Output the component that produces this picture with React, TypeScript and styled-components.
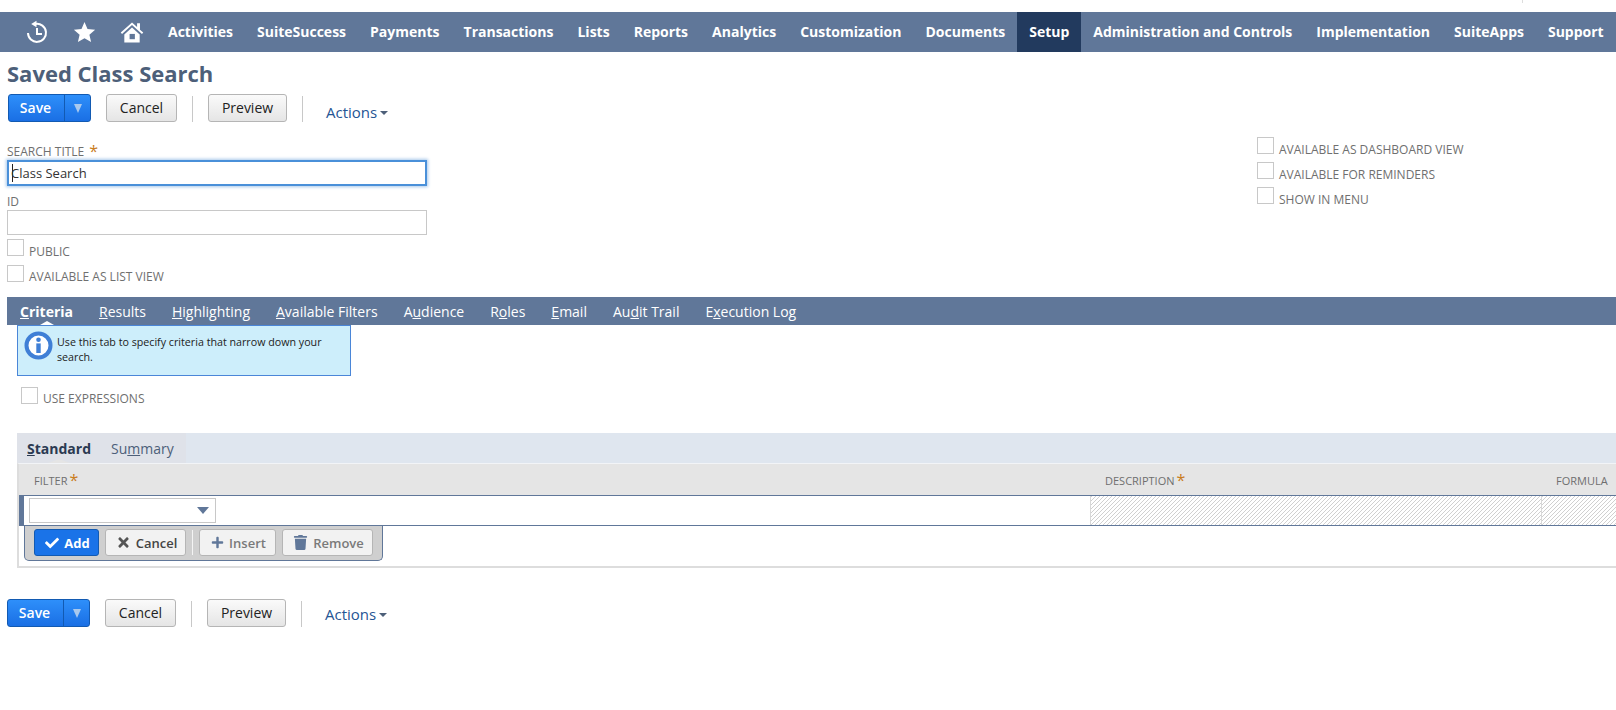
import styled, { createGlobalStyle } from "styled-components";
import { FaCheck, FaTimes, FaPlus, FaTrash } from "react-icons/fa";

const GlobalStyle = createGlobalStyle`
  html, body {
    margin: 0;
    padding: 0;
    background: #fff;
    overflow: hidden;
  }
  body {
    font-family: "Open Sans", "Liberation Sans", sans-serif;
  }
`;

const Page = styled.div`
  width: 1616px;
  height: 710px;
  overflow: hidden;
  position: relative;
`;

const TopStrip = styled.div`
  height: 12px;
  display: flex;
  justify-content: flex-end;
  padding-right: 93px;
`;

const Tick = styled.div`
  width: 1px;
  height: 3px;
  background: #ddd;
`;

const Nav = styled.nav`
  height: 40px;
  background: #607799;
  display: flex;
  align-items: stretch;
`;

const NavIcons = styled.div`
  display: flex;
  align-items: center;
  width: 156px;
  flex: none;
  padding-left: 25px;
  gap: 24px;
  box-sizing: border-box;
`;

const NavItem = styled.div<{ $active?: boolean }>`
  display: flex;
  align-items: center;
  padding: 0 12px 2px;
  white-space: nowrap;
  color: #fff;
  font-size: 14px;
  font-weight: 700;
  background: ${({ $active }) => ($active ? "#223a5e" : "transparent")};
`;

const Content = styled.div`
  padding-left: 7px;
`;

const Title = styled.h1`
  margin: 0;
  height: 42px;
  line-height: 43px;
  font-size: 22px;
  font-weight: 700;
  color: #4d5f79;
`;

const ButtonRow = styled.div<{ $shift?: number }>`
  display: flex;
  align-items: flex-start;
  height: 28px;
  margin-left: ${({ $shift }) => $shift ?? 1}px;
`;

const SaveGroup = styled.div`
  display: flex;
  width: 83px;
  height: 28px;
  box-sizing: border-box;
  border: 1px solid #125ab2;
  border-radius: 3px;
  background: linear-gradient(#2e8ffa, #1a6fe4);
`;

const SaveLabel = styled.div`
  width: 56px;
  box-sizing: border-box;
  padding-right: 2px;
  color: #fff;
  font-size: 14px;
  font-weight: 600;
  line-height: 26px;
  text-align: center;
  border-right: 1px solid #125ab2;
`;

const SaveArrow = styled.div`
  flex: 1;
  display: flex;
  align-items: center;
  justify-content: center;
  &::after {
    content: "";
    border-left: 4px solid transparent;
    border-right: 4px solid transparent;
    border-top: 9px solid #a9c9ee;
  }
`;

const GrayButton = styled.div<{ $width: number; $gap: number }>`
  width: ${({ $width }) => $width}px;
  height: 28px;
  margin-left: ${({ $gap }) => $gap}px;
  box-sizing: border-box;
  border: 1px solid #b5b5b5;
  border-radius: 3px;
  background: linear-gradient(#fafafa, #e5e5e5);
  color: #222;
  font-size: 14px;
  font-weight: 500;
  line-height: 26px;
  text-align: center;
`;

const Separator = styled.div`
  width: 1px;
  height: 26px;
  margin: 2px 0 0 15px;
  background: #c8c8c8;
`;

const Actions = styled.div<{ $top: number }>`
  margin: ${({ $top }) => $top}px 0 0 23px;
  color: #255594;
  font-size: 15px;
  line-height: 26px;
  display: flex;
  align-items: center;
  gap: 3px;
  &::after {
    content: "";
    margin-top: 2px;
    border-left: 4px solid transparent;
    border-right: 4px solid transparent;
    border-top: 4px solid #4d5f79;
  }
`;

const FormArea = styled.div`
  display: flex;
  height: 175px;
`;

const LeftForm = styled.div`
  width: 1250px;
  flex: none;
  padding-top: 21px;
`;

const RightForm = styled.div`
  padding-top: 15px;
`;

const FieldLabel = styled.div`
  height: 17px;
  line-height: 18px;
  font-size: 12px;
  color: #6f6f6f;
  display: flex;
  align-items: flex-start;
`;

const Required = styled.span`
  color: #c97d1d;
  font-size: 16px;
  line-height: 16px;
  margin-left: 5px;
`;

const TitleInput = styled.div`
  width: 420px;
  height: 26px;
  box-sizing: border-box;
  border: 2px solid #4a90d9;
  box-shadow: 0 0 3px 1px #a8c8ea;
  font-size: 13px;
  line-height: 22px;
  color: #333;
  display: flex;
  align-items: center;
  padding-left: 3px;
`;

const TextCaret = styled.span`
  width: 1px;
  height: 18px;
  margin-right: -2px;
  background: #222;
`;

const IdBlock = styled.div`
  margin-top: 7px;
`;

const IdInput = styled.div`
  width: 420px;
  height: 25px;
  box-sizing: border-box;
  border: 1px solid #c8c8c8;
`;

const CheckRow = styled.div<{ $height?: number }>`
  display: flex;
  align-items: flex-start;
  height: ${({ $height }) => $height ?? 25}px;
`;

const Box = styled.span`
  width: 17px;
  height: 17px;
  box-sizing: border-box;
  border: 1px solid #c8c8c8;
  flex: none;
`;

const CheckLabel = styled.span<{ $top?: number }>`
  margin: ${({ $top }) => $top ?? 4}px 0 0 5px;
  font-size: 12px;
  line-height: 18px;
  color: #6f6f6f;
  white-space: nowrap;
`;

const LeftChecks = styled.div`
  margin-top: 4px;
`;

const TabBar = styled.div`
  height: 28px;
  background: #607799;
  display: flex;
  align-items: stretch;
  padding-left: 13px;
  gap: 26px;
`;

const Tab = styled.div<{ $active?: boolean }>`
  position: relative;
  color: #fff;
  font-size: 14px;
  font-weight: ${({ $active }) => ($active ? 700 : 400)};
  line-height: 30px;
  white-space: nowrap;
  ${({ $active }) =>
    $active &&
    `&::after {
      content: "";
      position: absolute;
      left: 50%;
      bottom: 0;
      margin-left: -7px;
      border-left: 7px solid transparent;
      border-right: 7px solid transparent;
      border-bottom: 4px solid #fff;
    }`}
`;

const InfoBox = styled.div`
  margin-left: 10px;
  width: 334px;
  height: 51px;
  box-sizing: border-box;
  border: 1px solid #4a86d8;
  background: #cdeefb;
  display: flex;
  padding: 5px 6px 0 6px;
  gap: 4px;
`;

const InfoText = styled.div`
  font-size: 10.7px;
  line-height: 14.5px;
  color: #222;
  padding-top: 4px;
`;

const ExpressionRow = styled(CheckRow)`
  margin: 11px 0 0 14px;
  height: 46px;
`;

const SubTabStrip = styled.div`
  margin-left: 10px;
  height: 30px;
  background: #dfe6ef;
  display: flex;
`;

const SubTabs = styled.div`
  width: 169px;
  box-sizing: border-box;
  background: #dfe2e9;
  display: flex;
  padding-left: 10px;
  gap: 20px;
`;

const SubTab = styled.div<{ $active?: boolean }>`
  position: relative;
  font-size: 14px;
  line-height: 31px;
  color: ${({ $active }) => ($active ? "#2b3a52" : "#4d5f79")};
  font-weight: ${({ $active }) => ($active ? 700 : 400)};
  white-space: nowrap;
  ${({ $active }) =>
    $active &&
    `&::after {
      content: "";
      position: absolute;
      left: 50%;
      bottom: 0;
      margin-left: -11px;
      border-left: 11px solid transparent;
      border-right: 11px solid transparent;
      border-bottom: 4px solid #e5e5e5;
    }`}
`;

const GridBox = styled.div`
  margin-left: 10px;
  height: 105px;
  box-sizing: border-box;
  border-left: 2px solid #ddd;
  border-bottom: 2px solid #ddd;
  border-top: 1px solid #f2f4f7;
`;

const HeaderRow = styled.div`
  height: 31px;
  background: #e5e5e5;
  display: grid;
  grid-template-columns: 1071px 451px 1fr;
`;

const HeaderCell = styled.div<{ $pad: number }>`
  padding-left: ${({ $pad }) => $pad}px;
  font-size: 11px;
  line-height: 34px;
  color: #6f6f6f;
  display: flex;
  align-items: flex-start;
  white-space: nowrap;
`;

const HeaderStar = styled(Required)`
  margin: 8px 0 0 2px;
`;

const EditRow = styled.div`
  height: 31px;
  box-sizing: border-box;
  border-top: 1px solid #607799;
  border-bottom: 1px solid #607799;
  display: grid;
  grid-template-columns: 1071px 451px 1fr;
`;

const FilterCell = styled.div`
  border-left: 5px solid #607799;
  padding: 2px 0 0 5px;
`;

const HatchCell = styled.div`
  border-left: 1px solid #d8d8d8;
  background: repeating-linear-gradient(135deg, #d0d0d0 0, #d0d0d0 1.2px, #fff 1.2px, #fff 2.83px);
`;

const SelectBox = styled.div`
  width: 187px;
  height: 25px;
  box-sizing: border-box;
  border: 1px solid #c8c8c8;
  display: flex;
  align-items: center;
  justify-content: flex-end;
  padding-right: 6px;
  &::after {
    content: "";
    border-left: 6px solid transparent;
    border-right: 6px solid transparent;
    border-top: 7px solid #607799;
  }
`;

const ActionPanel = styled.div`
  margin-left: 5px;
  width: 359px;
  height: 35px;
  box-sizing: border-box;
  background: #cfcfcf;
  border: 1px solid #607799;
  border-top: none;
  border-radius: 0 0 5px 5px;
  display: flex;
  align-items: flex-start;
  padding: 3px 0 0 9px;
`;

const RowButton = styled.div<{ $width: number; $gap: number; $primary?: boolean; $muted?: boolean }>`
  width: ${({ $width }) => $width}px;
  height: 27px;
  margin-left: ${({ $gap }) => $gap}px;
  box-sizing: border-box;
  border: 1px solid ${({ $primary }) => ($primary ? "#125ab2" : "#b5b5b5")};
  border-radius: 3px;
  background: ${({ $primary }) => ($primary ? "#1a73e8" : "#f2f2f2")};
  color: ${({ $primary, $muted }) => ($primary ? "#fff" : $muted ? "#7a7a7a" : "#444")};
  font-size: 13px;
  font-weight: ${({ $primary }) => ($primary ? 700 : 600)};
  display: flex;
  align-items: center;
  justify-content: center;
  gap: 5px;
  padding-left: 2px;
`;

const PanelDivider = styled.div`
  width: 1px;
  height: 25px;
  margin: 1px 0 0 6px;
  background: #f4f4f4;
`;

const BottomRow = styled.div`
  margin-top: 31px;
`;

const HistoryIcon = () => (
  <svg width="24" height="24" viewBox="0 0 24 24" fill="none" stroke="#fff" strokeWidth="2">
    <path d="M10.5 4A9 9 0 1 1 3 13" />
    <path d="M11.5 .8 6.2 4l5.3 3.2Z" fill="#fff" stroke="none" />
    <path d="M12 8v6h5" />
  </svg>
);

const StarIcon = () => (
  <svg width="23" height="22" viewBox="0 0 22 22" fill="#fff">
    <path d="M11 1l3 7 7.6.7-5.7 5 1.7 7.4L11 17.2 4.4 21.1l1.7-7.4-5.7-5L8 8z" />
  </svg>
);

const HomeIcon = () => (
  <svg width="24" height="24" viewBox="0 0 25 24" fill="#fff">
    <path d="M12.5 2 .8 12.6l1.3 1.5L12.5 4.8l10.4 9.3 1.3-1.5-3.4-3V3h-3v3.8z" />
    <path d="M4.5 14.5 12.5 7.3l8 7.2V23H4.5z" />
    <rect x="10" y="14" width="5.5" height="5.5" fill="#607799" />
  </svg>
);

const InfoIcon = () => (
  <svg width="29" height="29" viewBox="0 0 29 29" style={{ flex: "none" }}>
    <circle cx="14.5" cy="14.5" r="12" fill="#fff" stroke="#3f7fd6" strokeWidth="4" />
    <circle cx="14.5" cy="8.8" r="2.3" fill="#3f7fd6" />
    <rect x="12.3" y="12.4" width="4.4" height="9.6" fill="#3f7fd6" />
  </svg>
);

const navItems = [
  "Activities",
  "SuiteSuccess",
  "Payments",
  "Transactions",
  "Lists",
  "Reports",
  "Analytics",
  "Customization",
  "Documents",
  "Setup",
  "Administration and Controls",
  "Implementation",
  "SuiteApps",
  "Support",
];

const Buttons = ({ shift, actionsTop }: { shift?: number; actionsTop: number }) => (
  <ButtonRow $shift={shift}>
    <SaveGroup>
      <SaveLabel>Save</SaveLabel>
      <SaveArrow />
    </SaveGroup>
    <GrayButton $width={71} $gap={15}>Cancel</GrayButton>
    <Separator />
    <GrayButton $width={79} $gap={15}>Preview</GrayButton>
    <Separator />
    <Actions $top={actionsTop}>Actions</Actions>
  </ButtonRow>
);

const App = () => {
  return (
    <Page>
      <GlobalStyle />
      <TopStrip>
        <Tick />
      </TopStrip>
      <Nav>
        <NavIcons>
          <HistoryIcon />
          <StarIcon />
          <HomeIcon />
        </NavIcons>
        {navItems.map((item) => (
          <NavItem key={item} $active={item === "Setup"}>
            {item}
          </NavItem>
        ))}
      </Nav>
      <Content>
        <Title>Saved Class Search</Title>
        <Buttons actionsTop={5} />
        <FormArea>
          <LeftForm>
            <FieldLabel>
              SEARCH TITLE<Required>*</Required>
            </FieldLabel>
            <TitleInput>
              <TextCaret />
              Class Search
            </TitleInput>
            <IdBlock>
              <FieldLabel>ID</FieldLabel>
              <IdInput />
            </IdBlock>
            <LeftChecks>
              <CheckRow $height={26}>
                <Box />
                <CheckLabel>PUBLIC</CheckLabel>
              </CheckRow>
              <CheckRow>
                <Box />
                <CheckLabel $top={3}>AVAILABLE AS LIST VIEW</CheckLabel>
              </CheckRow>
            </LeftChecks>
          </LeftForm>
          <RightForm>
            <CheckRow>
              <Box />
              <CheckLabel>AVAILABLE AS DASHBOARD VIEW</CheckLabel>
            </CheckRow>
            <CheckRow>
              <Box />
              <CheckLabel>AVAILABLE FOR REMINDERS</CheckLabel>
            </CheckRow>
            <CheckRow>
              <Box />
              <CheckLabel>SHOW IN MENU</CheckLabel>
            </CheckRow>
          </RightForm>
        </FormArea>
        <TabBar>
          <Tab $active>
            <u>C</u>riteria
          </Tab>
          <Tab>
            <u>R</u>esults
          </Tab>
          <Tab>
            <u>H</u>ighlighting
          </Tab>
          <Tab>
            <u>A</u>vailable Filters
          </Tab>
          <Tab>
            A<u>u</u>dience
          </Tab>
          <Tab>
            R<u>o</u>les
          </Tab>
          <Tab>
            <u>E</u>mail
          </Tab>
          <Tab>
            Au<u>d</u>it Trail
          </Tab>
          <Tab>
            E<u>x</u>ecution Log
          </Tab>
        </TabBar>
        <InfoBox>
          <InfoIcon />
          <InfoText>Use this tab to specify criteria that narrow down your search.</InfoText>
        </InfoBox>
        <ExpressionRow>
          <Box />
          <CheckLabel $top={3}>USE EXPRESSIONS</CheckLabel>
        </ExpressionRow>
        <SubTabStrip>
          <SubTabs>
            <SubTab $active>
              <u>S</u>tandard
            </SubTab>
            <SubTab>
              Su<u>m</u>mary
            </SubTab>
          </SubTabs>
        </SubTabStrip>
        <GridBox>
          <HeaderRow>
            <HeaderCell $pad={15}>
              FILTER<HeaderStar>*</HeaderStar>
            </HeaderCell>
            <HeaderCell $pad={15}>
              DESCRIPTION<HeaderStar>*</HeaderStar>
            </HeaderCell>
            <HeaderCell $pad={15}>FORMULA</HeaderCell>
          </HeaderRow>
          <EditRow>
            <FilterCell>
              <SelectBox />
            </FilterCell>
            <HatchCell />
            <HatchCell />
          </EditRow>
          <ActionPanel>
            <RowButton $width={65} $gap={0} $primary>
              <FaCheck size={14} />
              Add
            </RowButton>
            <RowButton $width={81} $gap={6}>
              <FaTimes size={15} color="#555" />
              Cancel
            </RowButton>
            <PanelDivider />
            <RowButton $width={77} $gap={6} $muted>
              <FaPlus size={13} color="#607799" />
              Insert
            </RowButton>
            <RowButton $width={91} $gap={6} $muted>
              <FaTrash size={15} color="#607799" />
              Remove
            </RowButton>
          </ActionPanel>
        </GridBox>
        <BottomRow>
          <Buttons shift={0} actionsTop={2} />
        </BottomRow>
      </Content>
    </Page>
  );
};

export default App;
